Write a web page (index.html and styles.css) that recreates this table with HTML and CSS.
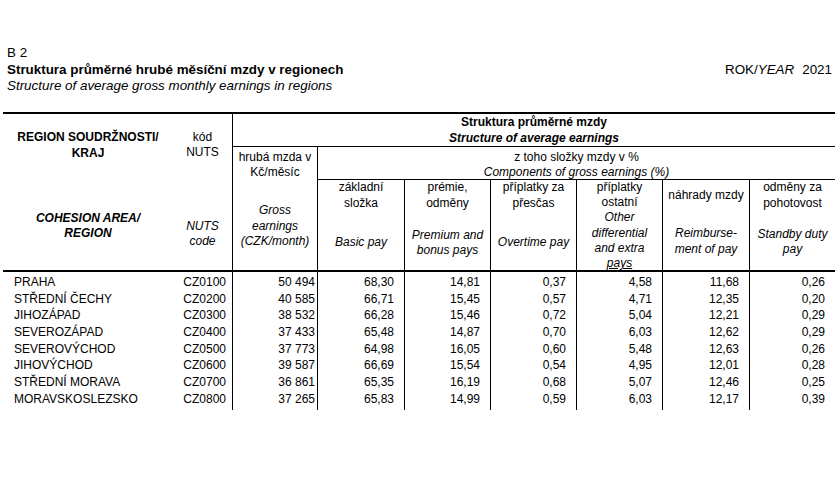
FILE: index.html
```html
<!DOCTYPE html>
<html lang="cs">
<head>
<meta charset="utf-8">
<title>B 2 – Struktura průměrné hrubé měsíční mzdy v regionech</title>
<link rel="stylesheet" href="styles.css">
</head>
<body>
<header class="doc-head">
  <div class="titles">
    <div class="code">B 2</div>
    <h1 class="title">Struktura průměrné hrubé měsíční mzdy v regionech</h1>
    <div class="subtitle">Structure of average gross monthly earnings in regions</div>
  </div>
  <div class="year">ROK/<i>YEAR</i><span class="yr">2021</span></div>
</header>

<div class="tbl">
  <div class="thead">
    <div class="h h-region">
      <div class="cs">REGION SOUDRŽNOSTI/<br>KRAJ</div>
      <div class="en">COHESION AREA/<br>REGION</div>
    </div>
    <div class="h h-nuts">
      <div class="cs">kód<br>NUTS</div>
      <div class="en">NUTS<br>code</div>
    </div>
    <div class="h h-struct">
      <div class="cs">Struktura průměrné mzdy</div>
      <div class="en">Structure of average earnings</div>
    </div>
    <div class="h h-gross">
      <div class="cs">hrubá mzda v<br>Kč/měsíc</div>
      <div class="en">Gross<br>earnings<br>(CZK/month)</div>
    </div>
    <div class="h h-comp">
      <div class="cs">z toho složky mzdy v %</div>
      <div class="en">Components of gross earnings (%)</div>
    </div>
    <div class="h h-sub s-basic">
      <div class="cs">základní<br>složka</div>
      <div class="en">Basic pay</div>
    </div>
    <div class="h h-sub s-prem">
      <div class="cs">prémie,<br>odměny</div>
      <div class="en">Premium and<br>bonus pays</div>
    </div>
    <div class="h h-sub s-over">
      <div class="cs">příplatky za<br>přesčas</div>
      <div class="en">Overtime pay</div>
    </div>
    <div class="h h-sub s-other">
      <div class="cs">příplatky<br>ostatní</div>
      <div class="en">Other<br>differential<br>and extra<br><u>pays</u></div>
    </div>
    <div class="h h-sub s-reimb">
      <div class="cs">náhrady mzdy</div>
      <div class="en">Reimburse-<br>ment of pay</div>
    </div>
    <div class="h h-sub s-standby">
      <div class="cs">odměny za<br>pohotovost</div>
      <div class="en">Standby duty<br>pay</div>
    </div>
  </div>

  <div class="tbody">
    <div class="tr"><div class="td name">PRAHA</div><div class="td nuts">CZ0100</div><div class="td gross">50 494</div><div class="td">68,30</div><div class="td">14,81</div><div class="td">0,37</div><div class="td">4,58</div><div class="td">11,68</div><div class="td">0,26</div></div>
    <div class="tr"><div class="td name">STŘEDNÍ ČECHY</div><div class="td nuts">CZ0200</div><div class="td gross">40 585</div><div class="td">66,71</div><div class="td">15,45</div><div class="td">0,57</div><div class="td">4,71</div><div class="td">12,35</div><div class="td">0,20</div></div>
    <div class="tr"><div class="td name">JIHOZÁPAD</div><div class="td nuts">CZ0300</div><div class="td gross">38 532</div><div class="td">66,28</div><div class="td">15,46</div><div class="td">0,72</div><div class="td">5,04</div><div class="td">12,21</div><div class="td">0,29</div></div>
    <div class="tr"><div class="td name">SEVEROZÁPAD</div><div class="td nuts">CZ0400</div><div class="td gross">37 433</div><div class="td">65,48</div><div class="td">14,87</div><div class="td">0,70</div><div class="td">6,03</div><div class="td">12,62</div><div class="td">0,29</div></div>
    <div class="tr"><div class="td name">SEVEROVÝCHOD</div><div class="td nuts">CZ0500</div><div class="td gross">37 773</div><div class="td">64,98</div><div class="td">16,05</div><div class="td">0,60</div><div class="td">5,48</div><div class="td">12,63</div><div class="td">0,26</div></div>
    <div class="tr"><div class="td name">JIHOVÝCHOD</div><div class="td nuts">CZ0600</div><div class="td gross">39 587</div><div class="td">66,69</div><div class="td">15,54</div><div class="td">0,54</div><div class="td">4,95</div><div class="td">12,01</div><div class="td">0,28</div></div>
    <div class="tr"><div class="td name">STŘEDNÍ MORAVA</div><div class="td nuts">CZ0700</div><div class="td gross">36 861</div><div class="td">65,35</div><div class="td">16,19</div><div class="td">0,68</div><div class="td">5,07</div><div class="td">12,46</div><div class="td">0,25</div></div>
    <div class="tr"><div class="td name">MORAVSKOSLEZSKO</div><div class="td nuts">CZ0800</div><div class="td gross">37 265</div><div class="td">65,83</div><div class="td">14,99</div><div class="td">0,59</div><div class="td">6,03</div><div class="td">12,17</div><div class="td">0,39</div></div>
  </div>
</div>
</body>
</html>
```

FILE: styles.css
```css
* {
  box-sizing: border-box;
  margin: 0;
  padding: 0;
}

:root {
  --cols: 170px 59px 85px 87px 86px 86px 86px 87px 86px;
  --line: #000;
}

body {
  margin: 0;
  background: #fff;
  color: #000;
  font-family: "Liberation Sans", Arial, sans-serif;
  font-size: 12px;
}

/* ---------- document header ---------- */
.doc-head {
  display: flex;
  justify-content: space-between;
  align-items: flex-start;
  padding: 45px 8px 0 7px;
  font-size: 13.4px;
  line-height: 16.5px;
}

.title {
  font-size: inherit;
  font-weight: bold;
}

.subtitle {
  font-style: italic;
}

.year {
  margin-top: 16.5px;
}

.yr {
  margin-left: 8px;
}

/* ---------- table ---------- */
.tbl {
  margin: 17.5px 0 0 3px;
  width: 832px;
}

.thead {
  display: grid;
  grid-template-columns: var(--cols);
  grid-template-rows: 33px 33px 90px;
  border-top: 2px solid var(--line);
  border-bottom: 2px solid var(--line);
  text-align: center;
  line-height: 15.5px;
}

.h .en {
  font-style: italic;
}

.h-region {
  grid-column: 1;
  grid-row: 1 / 4;
  font-weight: bold;
  padding-top: 16px;
}

.h-region .en {
  margin-top: 49.5px;
}

.h-nuts {
  grid-column: 2;
  grid-row: 1 / 4;
  padding-top: 15.5px;
}

.h-nuts .en {
  margin-top: 58px;
}

.h-struct {
  grid-column: 3 / 10;
  grid-row: 1;
  border-left: 1px solid var(--line);
  border-bottom: 1px solid var(--line);
  font-weight: bold;
  line-height: 16px;
}

.h-gross {
  grid-column: 3;
  grid-row: 2 / 4;
  border-left: 1px solid var(--line);
  padding-top: 2.5px;
}

.h-gross .en {
  margin-top: 22.5px;
}

.h-comp {
  grid-column: 4 / 10;
  grid-row: 2;
  border-left: 1px solid var(--line);
  border-bottom: 1px solid var(--line);
  padding-top: 2.5px;
}

.h-sub {
  grid-row: 3;
  border-left: 1px solid var(--line);
}

.s-basic .en,
.s-over .en {
  margin-top: 24px;
}

.s-prem .en {
  margin-top: 16.5px;
}

.s-other {
  line-height: 15.2px;
}

.s-reimb {
  padding-top: 8px;
}

.s-reimb .en {
  margin-top: 22.5px;
}

.s-standby .en {
  margin-top: 15.5px;
}

/* ---------- body ---------- */
.tr {
  display: grid;
  grid-template-columns: var(--cols);
  line-height: 16.65px;
}

.td {
  border-left: 1px solid var(--line);
  text-align: right;
  padding-right: 10px;
  white-space: nowrap;
}

.td.name {
  border-left: none;
  text-align: left;
  padding-left: 11px;
}

.td.nuts {
  border-left: none;
  padding-right: 6px;
}

.td.gross {
  padding-right: 2px;
}

.tr:first-child .td {
  padding-top: 2px;
}

.tr:last-child .td {
  padding-bottom: 3px;
}
```
